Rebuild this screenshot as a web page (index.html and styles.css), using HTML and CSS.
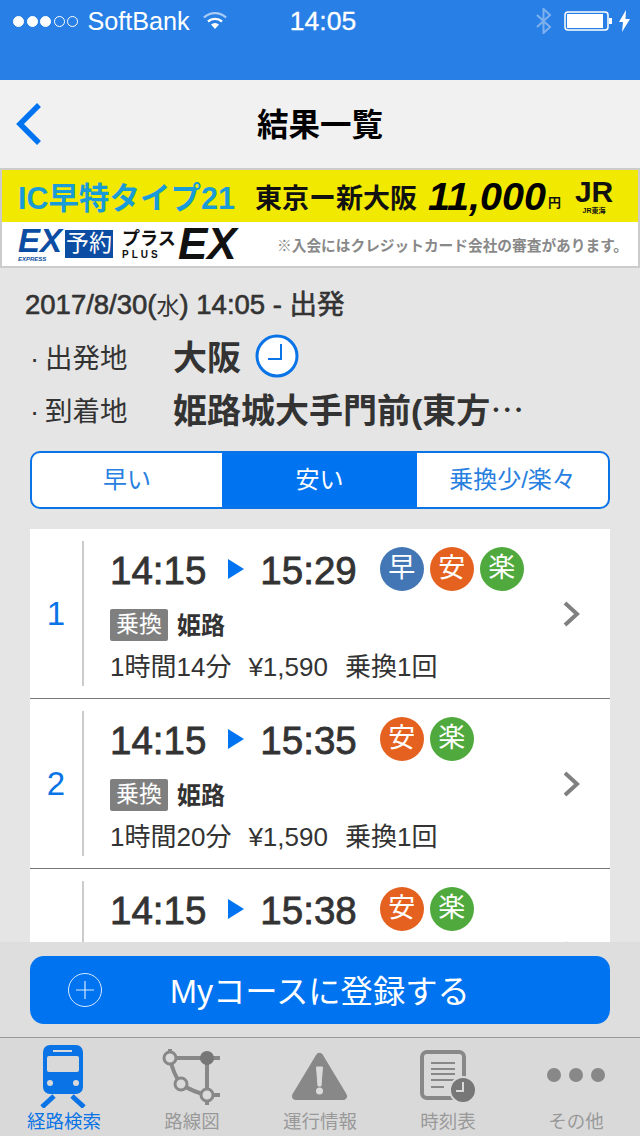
FILE: index.html
```html
<!DOCTYPE html>
<html lang="ja">
<head>
    <meta charset="UTF-8">
    <title>結果一覧</title>
    <link rel="stylesheet" href="styles.css">
</head>
<body>

<div class="topbar">
    <div class="status">
        <div class="status-left">
            <span class="sig on"></span><span class="sig on"></span><span class="sig on"></span><span class="sig"></span><span class="sig"></span>
            <span class="carrier">SoftBank</span>
            <svg class="wifi" width="24" height="18" viewBox="0 0 24 18">
                <path d="M1 6.5a16 16 0 0 1 22 0" fill="none" stroke="#a9ccf5" stroke-width="2.4"/>
                <path d="M5 10.5a10.500 10.500 0 0 1 14 0" fill="none" stroke="#fff" stroke-width="2.4"/>
                <path d="M8 13.500a6 6 0 0 1 8 0L12 18z" fill="#fff"/>
            </svg>
        </div>
        <div class="clock">14:05</div>
        <div class="status-right">
            <svg width="18" height="26" viewBox="0 0 18 26">
                <path d="M2 7l13 12-6.500 6V1L15 7 2 19" fill="none" stroke="#7fb0ee" stroke-width="2"/>
            </svg>
            <svg class="battery" width="50" height="20" viewBox="0 0 50 20">
                <rect x="1" y="1" width="43" height="18" rx="3" fill="none" stroke="#fff" stroke-width="1.500"/>
                <rect x="3" y="3" width="36" height="14" fill="#fff"/>
                <rect x="45" y="7" width="3" height="6" fill="#fff"/>
            </svg>
            <svg width="11" height="22" viewBox="0 0 11 22">
                <path d="M7 0L0 12h4l-1 10 8-13H6.500z" fill="#fff"/>
            </svg>
        </div>
    </div>
</div>

<div class="main">
    <div class="nav">
        <svg class="back" width="30" height="46" viewBox="0 0 30 46">
            <path d="M25 4L6 23l19 19" fill="none" stroke="#0074f0" stroke-width="5.500"/>
        </svg>
        <div class="nav-title">結果一覧</div>
    </div>

    <div class="banner">
        <div class="banner-top">
            <span class="fare-name">IC早特タイプ21</span>
            <span class="fare-route">東京ー新大阪</span>
            <span class="fare-price">11,000</span><span class="fare-yen">円</span>
            <span class="jr"><b>JR</b><i>JR東海</i></span>
        </div>
        <div class="banner-bottom">
            <span class="ex-blue"><b>EX</b><i>EXPRESS</i></span>
            <span class="ex-box">予約</span>
            <span class="plus"><b>プラス</b><i>PLUS</i></span>
            <span class="ex-black">EX</span>
            <span class="banner-note">※入会にはクレジットカード会社の審査があります。</span>
        </div>
    </div>

    <div class="summary">
        <div class="date">2017/8/30(<span class="weekday">水</span>) 14:05 - 出発</div>
        <div class="place">
            <span class="place-label"><span class="dot">·</span>出発地</span>
            <span class="place-name">大阪</span>
            <svg class="clock-icon" width="44" height="44" viewBox="0 0 44 44">
                <circle cx="22" cy="22" r="20" fill="#fff" stroke="#0a74e6" stroke-width="3"/>
                <path d="M26 10v15H13" fill="none" stroke="#0a74e6" stroke-width="2"/>
            </svg>
        </div>
        <div class="place">
            <span class="place-label"><span class="dot">·</span>到着地</span>
            <span class="place-name">姫路城大手門前(東方<span class="ellipsis">…</span></span>
        </div>
    </div>

    <div class="segments">
        <div class="segment">早い</div>
        <div class="segment active">安い</div>
        <div class="segment">乗換少/楽々</div>
    </div>

    <div class="routes">
        <div class="route">
            <div class="route-no">1</div>
            <div class="route-body">
                <div class="times">
                    <span>14:15</span>
                    <svg class="arrow" width="16" height="20" viewBox="0 0 16 20"><path d="M0 0l16 10L0 20z"/></svg>
                    <span>15:29</span>
                    <div class="badges">
                        <span class="badge fast">早</span>
                        <span class="badge cheap">安</span>
                        <span class="badge easy">楽</span>
                    </div>
                </div>
                <div class="via"><span class="tag">乗換</span><span class="via-name">姫路</span></div>
                <div class="detail"><span>1時間14分</span><span>¥1,590</span><span>乗換1回</span></div>
            </div>
            <svg class="more" width="18" height="26" viewBox="0 0 18 26"><path d="M3 2l12 11L3 24" fill="none" stroke="#808080" stroke-width="4"/></svg>
        </div>

        <div class="route">
            <div class="route-no">2</div>
            <div class="route-body">
                <div class="times">
                    <span>14:15</span>
                    <svg class="arrow" width="16" height="20" viewBox="0 0 16 20"><path d="M0 0l16 10L0 20z"/></svg>
                    <span>15:35</span>
                    <div class="badges">
                        <span class="badge cheap">安</span>
                        <span class="badge easy">楽</span>
                    </div>
                </div>
                <div class="via"><span class="tag">乗換</span><span class="via-name">姫路</span></div>
                <div class="detail"><span>1時間20分</span><span>¥1,590</span><span>乗換1回</span></div>
            </div>
            <svg class="more" width="18" height="26" viewBox="0 0 18 26"><path d="M3 2l12 11L3 24" fill="none" stroke="#808080" stroke-width="4"/></svg>
        </div>

        <div class="route">
            <div class="route-no">3</div>
            <div class="route-body">
                <div class="times">
                    <span>14:15</span>
                    <svg class="arrow" width="16" height="20" viewBox="0 0 16 20"><path d="M0 0l16 10L0 20z"/></svg>
                    <span>15:38</span>
                    <div class="badges">
                        <span class="badge cheap">安</span>
                        <span class="badge easy">楽</span>
                    </div>
                </div>
            </div>
            <svg class="more" width="18" height="26" viewBox="0 0 18 26"><path d="M3 2l12 11L3 24" fill="none" stroke="#808080" stroke-width="4"/></svg>
        </div>
    </div>
</div>

<div class="register">
    <div class="register-btn">
        <svg width="34" height="34" viewBox="0 0 34 34">
            <circle cx="17" cy="17" r="16.500" fill="none" stroke="#d5e8ff" stroke-width="1"/>
            <path d="M17 8v18M8 17h18" fill="none" stroke="#d5e8ff" stroke-width="1.200"/>
        </svg>
        <span>Myコースに登録する</span>
    </div>
</div>

<div class="tabs">
    <div class="tab current">
        <svg width="128" height="64" viewBox="0 0 128 64">
            <rect x="43" y="1" width="40" height="49" rx="7" fill="#0a74e6"/>
            <rect x="47" y="12" width="32" height="16" rx="2" fill="#d9d9d9"/>
            <path d="M53 7h19" stroke="#d9d9d9" stroke-width="2"/>
            <circle cx="50" cy="39" r="3" fill="#d9d9d9"/>
            <circle cx="76" cy="39" r="3" fill="#d9d9d9"/>
            <path d="M54 52L42 63M72 52l12 11" stroke="#0a74e6" stroke-width="5"/>
        </svg>
        <div class="tab-label">経路検索</div>
    </div>
    <div class="tab">
        <svg width="128" height="64" viewBox="0 0 128 64">
            <path d="M42 5v9h50M79 14v47M42 14q3 16 11 26 12 8 26 11h13" fill="none" stroke="#888" stroke-width="4"/>
            <circle cx="79" cy="14" r="7" fill="#777"/>
            <circle cx="42" cy="14" r="6" fill="#dadada" stroke="#888" stroke-width="3"/>
            <circle cx="53" cy="40" r="6" fill="#dadada" stroke="#888" stroke-width="3"/>
            <circle cx="79" cy="51" r="6" fill="#dadada" stroke="#888" stroke-width="3"/>
        </svg>
        <div class="tab-label">路線図</div>
    </div>
    <div class="tab">
        <svg width="128" height="64" viewBox="0 0 128 64">
            <path d="M63.500 13L87 52H40z" fill="#888" stroke="#888" stroke-width="8" stroke-linejoin="round"/>
            <path d="M60.500 23h6l-1.500 19h-3z" fill="#dadada" stroke="#dadada" stroke-width="1" stroke-linejoin="round"/>
            <circle cx="63.500" cy="47" r="3.500" fill="#dadada"/>
        </svg>
        <div class="tab-label">運行情報</div>
    </div>
    <div class="tab">
        <svg width="128" height="64" viewBox="0 0 128 64">
            <rect x="38" y="8" width="42" height="46" rx="5" fill="none" stroke="#888" stroke-width="4"/>
            <path d="M47 19h24M47 25h24M47 30h24M47 36h24M47 43h13" stroke="#888" stroke-width="2"/>
            <circle cx="79" cy="46" r="13" fill="#777" stroke="#d9d9d9" stroke-width="2"/>
            <path d="M79 38v9h-7" fill="none" stroke="#dadada" stroke-width="2"/>
        </svg>
        <div class="tab-label">時刻表</div>
    </div>
    <div class="tab">
        <svg width="128" height="64" viewBox="0 0 128 64">
            <circle cx="42" cy="31" r="7" fill="#888"/>
            <circle cx="64" cy="31" r="7" fill="#888"/>
            <circle cx="86" cy="31" r="7" fill="#888"/>
        </svg>
        <div class="tab-label">その他</div>
    </div>
</div>

</body>
</html>
```

FILE: styles.css
```css
html, body {
    height:  100vh;
    margin:  0;
    padding: 0;
}
body {
    display:        flex;
    flex-direction: column;
    overflow:       hidden;
    background:     #e5e5e5;
    color:          #333;
    font-family:    "Liberation Sans", "Noto Sans CJK JP", sans-serif;
}
svg {
    display:     block;
    flex-shrink: 0;
}

/* status bar */
.topbar {
    height:      80px;
    flex-shrink: 0;
    background:  #2880e6;
}
.status {
    display:               grid;
    grid-template-columns: 1fr auto 1fr;
    align-items:           center;
    height:                42px;
    color:                 #fff;
    font-size:             25px;
}
.status-left {
    display:      flex;
    align-items:  center;
    padding-left: 13px;
}
.sig {
    width:         11px;
    height:        11px;
    margin-right:  2.5px;
    border:        1px solid #fff;
    border-radius: 50%;
    box-sizing:    border-box;
}
.sig.on {
    background: #fff;
}
.carrier {
    margin-left: 7px;
    font-size:   25.200px;
}
.wifi {
    margin-left: 13px;
    margin-top:  -3px;
}
.clock {
    padding-left: 6px;
    font-size:    26.500px;
    -webkit-text-stroke: 0.3px #fff;
}
.status-right {
    display:         flex;
    align-items:     center;
    justify-content: flex-end;
    padding-right:   10px;
}
.battery {
    margin-left:  11px;
    margin-right: 5px;
}

.main {
    flex:     1;
    height:   0;
    overflow: hidden;
}
.nav {
    display:               grid;
    grid-template-columns: 1fr auto 1fr;
    align-items:           center;
    height:                88px;
    background:            #f1f1f1;
}
.back {
    margin-left: 14px;
}
.nav-title {
    padding-bottom: 4px;
    color:          #000;
    font-size:      31.500px;
    font-weight:    bold;
}

/* fare banner */
.banner {
    height:     96px;
    border:     2px solid #ccc;
    background: #fff;
    overflow:   hidden;
}
.banner-top {
    display:      flex;
    align-items:  center;
    height:       52px;
    padding-left: 16px;
    background:   #f2e900;
    color:        #111;
    white-space:  nowrap;
}
.fare-name {
    width:       237px;
    color:       #189bd6;
    font-size:   30.500px;
    font-weight: bold;
}
.fare-route {
    width:       173px;
    font-size:   27px;
    font-weight: bold;
}
.fare-price {
    color:       #000;
    font-size:   39.500px;
    font-style:  italic;
    font-weight: bold;
}
.fare-yen {
    margin-left: 2px;
    margin-top:  10px;
    font-size:   13px;
    font-weight: bold;
}
.jr {
    display:        flex;
    flex-direction: column;
    align-items:    center;
    margin-left:    14px;
    color:          #111;
}
.jr b {
    font-size:   30px;
    line-height: 30px;
}
.jr i {
    font-size:   7px;
    font-style:  normal;
    font-weight: bold;
    line-height: 8px;
}
.banner-bottom {
    display:      flex;
    align-items:  center;
    height:       44px;
    padding-left: 16px;
    white-space:  nowrap;
}
.ex-blue {
    display:        flex;
    flex-direction: column;
    width:          47px;
    color:          #0b4da2;
}
.ex-blue b {
    font-size:   33px;
    font-style:  italic;
    line-height: 30px;
}
.ex-blue i {
    font-size:   6px;
    font-weight: bold;
    line-height: 6px;
}
.ex-box {
    width:       48px;
    height:      28px;
    background:  #0b4da2;
    color:       #fff;
    font-size:   23px;
    line-height: 27px;
    text-align:  center;
}
.plus {
    display:        flex;
    flex-direction: column;
    width:          56px;
    margin-left:    9px;
    color:          #111;
}
.plus b {
    font-size:   18px;
    line-height: 20px;
}
.plus i {
    font-size:      10px;
    font-style:     normal;
    font-weight:    bold;
    letter-spacing: 3px;
    line-height:    11px;
}
.ex-black {
    width:       99px;
    color:       #111;
    font-size:   44px;
    font-style:  italic;
    font-weight: bold;
}
.banner-note {
    color:       #888;
    font-size:   14.700px;
    font-weight: bold;
}

/* search summary */
.summary {
    padding: 19px 0 0 25px;
}
.date {
    margin-bottom: 5px;
    font-size:     27.500px;
    line-height:   36px;
    white-space:   nowrap;
    -webkit-text-stroke: 0.6px #333;
}
.weekday {
    font-size: 23px;
    -webkit-text-stroke: 0;
}
.place {
    display:      flex;
    align-items:  center;
    height:       53px;
    padding-left: 5px;
}
.place-label {
    width:     143px;
    font-size: 27.500px;
}
.dot {
    display: inline-block;
    width:   15px;
}
.place-name {
    font-size:   34px;
    font-weight: bold;
    white-space: nowrap;
}
.ellipsis {
    font-family: "Noto Sans CJK JP", sans-serif;
    font-weight: normal;
}
.clock-icon {
    margin-left: 14px;
}

/* sort switch */
.segments {
    display:               grid;
    grid-template-columns: 190px 195px 1fr;
    height:                54px;
    margin:                16px 30px 20px;
    border:                2px solid #0a74e6;
    border-radius:         10px;
    background:            #fff;
    overflow:              hidden;
}
.segment {
    color:       #2880e0;
    font-size:   24px;
    line-height: 54px;
    text-align:  center;
}
.segment.active {
    background: #0074f0;
    color:      #fff;
}

/* result rows */
.routes {
    margin: 0 30px;
}
.route {
    display:       flex;
    height:        170px;
    box-sizing:    border-box;
    padding:       12px 30px 12px 0;
    border-bottom: 1px solid #777;
    background:    #fff;
}
.route-no {
    display:         flex;
    align-items:     center;
    justify-content: center;
    width:           52px;
    border-right:    2px solid #ccc;
    color:           #0a74e6;
    font-size:       33px;
}
.route-body {
    flex:         1;
    padding-left: 26px;
    padding-top:  6px;
}
.times {
    display:     flex;
    align-items: center;
    height:      44px;
    font-size:   38.500px;
    -webkit-text-stroke: 0.8px #333;
}
.times > span {
    padding-top: 4px;
}
.arrow {
    margin: 0 16px 0 22px;
    fill:   #0074f0;
}
.badges {
    display:     flex;
    gap:         6px;
    margin-left: 23px;
    -webkit-text-stroke: 0;
}
.badge {
    width:         44px;
    height:        44px;
    border-radius: 50%;
    color:         #fff;
    font-size:     27px;
    line-height:   42px;
    text-align:    center;
}
.fast {
    background: #4376b5;
}
.cheap {
    background: #e4611f;
}
.easy {
    background: #4fa93c;
}
.via {
    display:     flex;
    align-items: center;
    height:      32px;
    margin-top:  18px;
}
.tag {
    width:         58px;
    height:        32px;
    border-radius: 2px;
    background:    #7f7f7f;
    color:         #fff;
    font-size:     23px;
    line-height:   31px;
    text-align:    center;
}
.via-name {
    margin-left:    9px;
    padding-bottom: 3px;
    font-size:      24px;
    font-weight:    bold;
}
.detail {
    display:     flex;
    gap:         17px;
    margin-top:  9px;
    font-size:   26px;
    line-height: 34px;
    white-space: nowrap;
}
.more {
    align-self: center;
}

/* register bar */
.register {
    flex-shrink: 0;
    height:      95px;
    box-sizing:  border-box;
    padding:     14px 30px 13px;
    background:  #dedede;
}
.register-btn {
    display:       flex;
    align-items:   center;
    height:        68px;
    padding-left:  38px;
    border-radius: 14px;
    background:    #0074f0;
    color:         #fff;
    font-size:     32.300px;
}
.register-btn span {
    margin-left:    68px;
    padding-bottom: 2px;
}

/* tab bar */
.tabs {
    display:               grid;
    grid-template-columns: repeat(5, 1fr);
    flex-shrink:           0;
    height:                99px;
    box-sizing:            border-box;
    padding-top:           6px;
    border-top:            1px solid #999;
    background:            #d9d9d9;
}
.tab-label {
    padding-top: 1px;
    color:       #999;
    font-size:   18.500px;
    line-height: 26px;
    text-align:  center;
}
.current .tab-label {
    color: #0a74e6;
}
```
